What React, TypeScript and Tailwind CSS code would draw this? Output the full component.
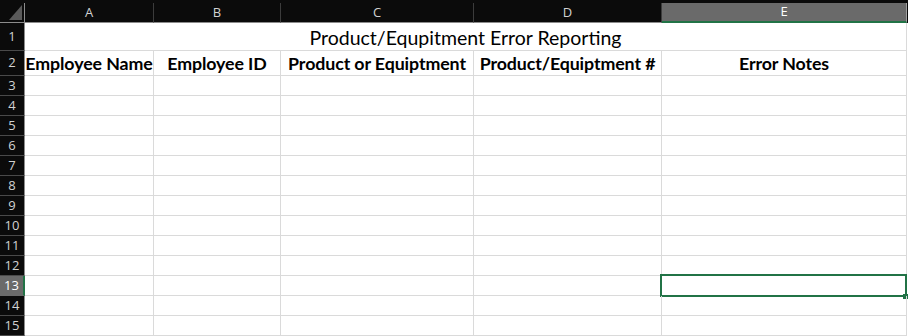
const cols = [
  { letter: "A", width: "w-[129px]" },
  { letter: "B", width: "w-[127px]" },
  { letter: "C", width: "w-[193px]" },
  { letter: "D", width: "w-[188px]" },
  { letter: "E", width: "w-[245px]" },
];

const headings = [
  "Employee Name",
  "Employee ID",
  "Product or Equiptment",
  "Product/Equiptment #",
  "Error Notes",
];

const bodyRows = [3, 4, 5, 6, 7, 8, 9, 10, 11, 12, 13, 14, 15];

function RowHead({ n, h, active }: { n: number; h: string; active?: boolean }) {
  return (
    <div
      className={`${h} w-[25px] shrink-0 flex items-center justify-center border-b text-[13px] ${
        active
          ? "bg-[#6a6a6a] text-white border-b-[#6a6a6a] border-r-2 border-r-[#217346]"
          : "bg-[#0b0b0b] text-[#d2d2d2] border-b-[#4a4a4a] border-r border-r-[#8c8c8c]"
      }`}
    >
      {n}
    </div>
  );
}

export default function App() {
  return (
    <div className="w-[908px] h-[336px] overflow-hidden bg-white font-['Lato',sans-serif]">
      {/* column headers */}
      <div className="flex h-[23px] bg-[#0b0b0b] pt-[3px] font-['Open_Sans',sans-serif] text-[13px]">
        <div className="w-[25px] shrink-0 relative border-r border-[#8c8c8c] border-b border-b-[#8c8c8c]">
          <svg width="13" height="15" viewBox="0 0 13 15" className="absolute right-[2px] bottom-[2px]">
            <polygon points="13,0 13,15 0,15" fill="#5a5a5a" />
          </svg>
        </div>
        {cols.map((c) =>
          c.letter === "E" ? (
            <div
              key={c.letter}
              className={`${c.width} shrink-0 flex items-center justify-center bg-[#6a6a6a] text-white border-b-2 border-[#217346] border-r border-r-[#a0a0a0]`}
            >
              {c.letter}
            </div>
          ) : (
            <div
              key={c.letter}
              className={`${c.width} shrink-0 flex items-center justify-center text-[#d2d2d2] border-r border-[#3c3c3c] border-b border-b-[#8c8c8c]`}
            >
              {c.letter}
            </div>
          )
        )}
      </div>

      {/* row 1: title */}
      <div className="flex">
        <div className="font-['Open_Sans',sans-serif]">
          <RowHead n={1} h="h-[28px]" />
        </div>
        <div className="w-[882px] h-[28px] flex items-end justify-center border-b border-r border-[#dadada] text-[19.5px] text-black leading-none">
          <span className="pb-[3px]">Product/Equpitment Error Reporting</span>
        </div>
      </div>

      {/* row 2: headings */}
      <div className="flex">
        <div className="font-['Open_Sans',sans-serif]">
          <RowHead n={2} h="h-[25px]" />
        </div>
        {cols.map((c, i) => (
          <div
            key={c.letter}
            className={`${c.width} h-[25px] shrink-0 flex items-center justify-center whitespace-nowrap border-b border-r border-[#dadada] text-[17.8px] font-bold text-black tracking-[-0.1px]`}
          >
            {headings[i]}
          </div>
        ))}
      </div>

      {/* body rows */}
      {bodyRows.map((n) => (
        <div key={n} className="flex">
          <div className="font-['Open_Sans',sans-serif]">
            <RowHead n={n} h="h-[20px]" active={n === 13} />
          </div>
          {cols.map((c) => (
            <div
              key={c.letter}
              className={`${c.width} h-[20px] shrink-0 relative border-b border-r border-[#dadada]`}
            >
              {n === 13 && c.letter === "E" && (
                <>
                  <div className="absolute left-[-2px] top-[-2px] right-[-1px] bottom-[-2px] border-2 border-[#217346]" />
                  <div className="absolute right-[-2px] bottom-[-4px] w-[5px] h-[5px] bg-[#217346]" />
                </>
              )}
            </div>
          ))}
        </div>
      ))}
    </div>
  );
}
